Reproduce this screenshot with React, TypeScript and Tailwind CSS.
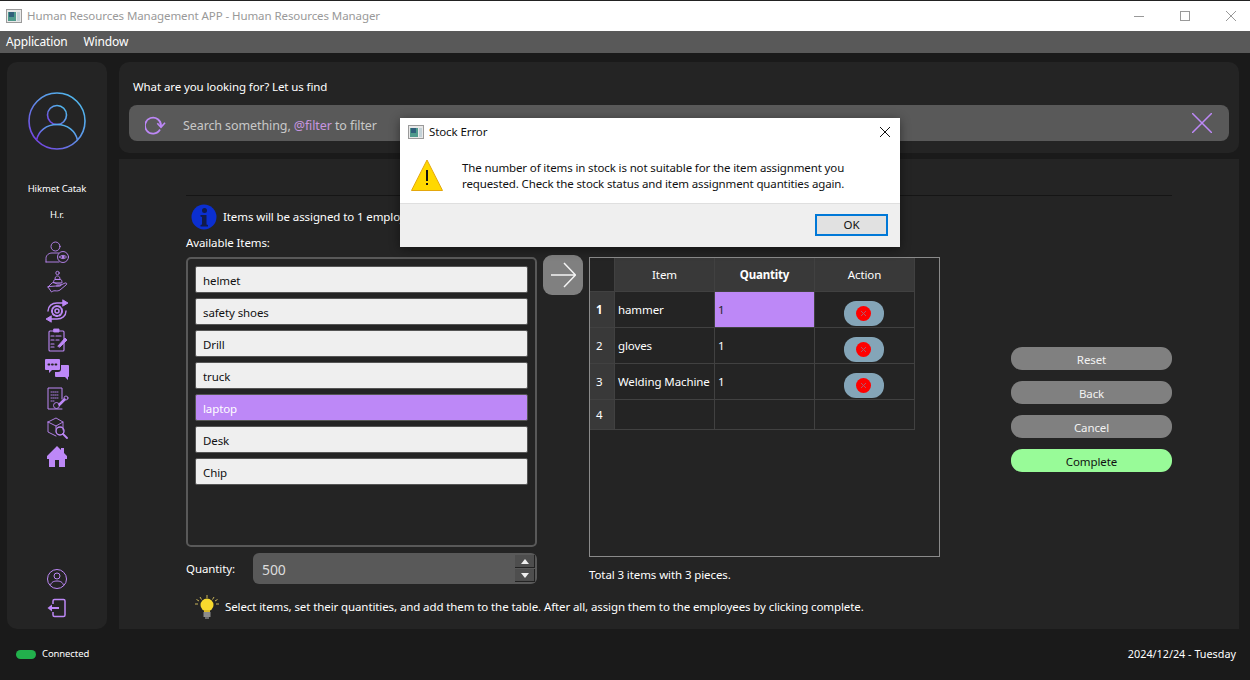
import { ReactNode } from 'react';

const items = ['helmet', 'safety shoes', 'Drill', 'truck', 'laptop', 'Desk', 'Chip'];

const rows = [
  { no: '1', item: 'hammer', qty: '1' },
  { no: '2', item: 'gloves', qty: '1' },
  { no: '3', item: 'Welding Machine', qty: '1' },
];

const Icon = ({ children, w = 24, h = 24 }: { children: ReactNode; w?: number; h?: number }) => (
  <svg width={w} height={h} viewBox="0 0 24 24" fill="none" stroke="#bd88f7" strokeWidth="0.9" strokeLinecap="round" strokeLinejoin="round">
    {children}
  </svg>
);

const AppIcon = () => (
  <svg width="16" height="14" viewBox="0 0 16 14">
    <rect x="0.5" y="0.5" width="15" height="13" fill="#e8e8e8" stroke="#9a9a9a" />
    <rect x="2" y="3" width="8" height="9" fill="#4f9a8c" />
    <rect x="3" y="3" width="5" height="5" fill="#2f5f7b" />
    <rect x="11" y="3" width="3" height="9" fill="#c4d2d8" />
  </svg>
);

const SideIcons = () => (
  <div className="flex flex-col items-center gap-[5px]">
    <Icon>
      <circle cx="10.5" cy="5.5" r="4.5" />
      <path d="M1 21v-3.5c0-3.5 3-5.5 6-5.5h6.5M1 21h13" />
      <circle cx="18" cy="16" r="5.5" />
      <path d="M14.5 16c2-2.2 5-2.2 7 0-2 2.2-5 2.2-7 0z" />
      <circle cx="18" cy="16" r="1" fill="#bd88f7" />
    </Icon>
    <Icon>
      <circle cx="12.5" cy="3" r="1.7" />
      <path d="M10 9c0-2 1-3 2.5-3s2.500 1 2.500 3zM8.500 12.500c0-2 1-3 1.500-3h5.500c1 0 1.500 1.500 1.500 3z" />
      <path d="M3 17l4-4c1-.8 2-.8 3 0l2 1h3c1.500 0 1.500 2-.5 2h-3M15 15.500l5-2.500c1.500-.5 2.500.8 1 2l-6 5c-1.500 1-3 1-5 .8-1.500-.2-2.500.5-3.500 1.200L3 17z" />
    </Icon>
    <Icon>
      <path d="M3 12c0-5 4-8 9-8h7" strokeWidth="1.400" />
      <path d="M18 1l5 3-5 3z" fill="#bd88f7" />
      <path d="M21 12c0 5-4 8-9 8H5" strokeWidth="1.400" />
      <path d="M6 17l-5 3 5 3z" fill="#bd88f7" />
      <circle cx="12" cy="12" r="2" strokeWidth="1.500" />
      <circle cx="12" cy="12" r="5" strokeWidth="2" strokeDasharray="2 1.500" />
    </Icon>
    <Icon>
      <rect x="4" y="3" width="15" height="20" rx="1" strokeWidth="1.100" />
      <rect x="9" y="1" width="5" height="3" fill="#bd88f7" />
      <path d="M6 8h3M6 12h3M6 16h3M6 19h3M11 8h5M11 12h3" strokeWidth="1.200" />
      <path d="M13 18l7-8 2 2-7 7z" fill="#bd88f7" />
    </Icon>
    <Icon>
      <path d="M1 2h13a1 1 0 0 1 1 1v9a1 1 0 0 1-1 1H7l-3 3v-3H1a1 1 0 0 1-1-1V3a1 1 0 0 1 1-1z" fill="#bd88f7" stroke="none" />
      <path d="M3.500 7.500h.8M7 7.500h.8M10.500 7.500h.8" stroke="#242424" strokeWidth="2" />
      <path d="M16 8h7a1 1 0 0 1 1 1v10a1 1 0 0 1-1 1v3l-3-3h-9a1 1 0 0 1-1-1v-4h3a3 3 0 0 0 3-3z" fill="#bd88f7" stroke="none" />
    </Icon>
    <Icon>
      <path d="M17 13V2H3v21h14" strokeWidth="1" />
      <path d="M6 6h8M6 9h8M6 12h8M6 15h4" strokeDasharray="1 1" />
      <circle cx="21" cy="12" r="2" />
      <path d="M19.500 13.500l-5 5" strokeWidth="2.500" />
      <ellipse cx="11.500" cy="19.500" rx="3" ry="3" />
    </Icon>
    <Icon>
      <path d="M3 7l8-4 7 4v8M3 7v10l8 4M3 7l8 4 7-4M11 11v3" />
      <circle cx="15" cy="16" r="4" strokeWidth="1.400" />
      <path d="M18 19l4 4" strokeWidth="1.800" />
    </Icon>
    <svg width="24" height="24" viewBox="0 0 24 24">
      <path d="M12 2L2 12v3h2v8h6v-7h4v7h6v-8h2v-3l-3-3V4h-3v2z" fill="#bd88f7" />
    </svg>
  </div>
);

const Avatar = () => (
  <svg width="60" height="60" viewBox="0 0 60 60" fill="none" stroke="url(#ring)" strokeWidth="1.600">
    <defs>
      <linearGradient id="ring" x1="1" y1="0" x2="0" y2="1">
        <stop offset="0" stopColor="#4cc4ef" />
        <stop offset="0.5" stopColor="#5f8fe8" />
        <stop offset="1" stopColor="#7a2fe0" />
      </linearGradient>
    </defs>
    <circle cx="30" cy="30" r="28" />
    <circle cx="30" cy="24" r="9.500" />
    <path d="M9.500 49c2-9 10-15.500 20.500-15.500S48.500 40 50.500 49" />
  </svg>
);

const InfoIcon = () => (
  <svg width="26" height="26" viewBox="0 0 26 26" className="shrink-0">
    <circle cx="13" cy="13" r="12.500" fill="#0b2fd0" />
    <circle cx="13.500" cy="6.500" r="2.500" fill="#111b4a" />
    <path d="M9.500 11h6v9.500l1.500.5v1.500H9.500V21l1.500-.5V13l-1.500-.5z" fill="#111b4a" />
  </svg>
);

const BulbIcon = () => (
  <svg width="26" height="26" viewBox="0 0 26 26" className="shrink-0">
    <path d="M13 1v3M6 3l1.500 2.500M20 3l-1.500 2.500M1 10h3M22 10h3M2.500 5.500l2.500 1.500M23.500 5.500L21 7" stroke="#c9b458" strokeWidth="1" />
    <circle cx="13" cy="11" r="6.500" fill="#f7d92e" />
    <path d="M10 16h6v2h-6z" fill="#d8b928" />
    <rect x="9.500" y="18" width="7" height="5" fill="#8c8c8c" />
    <rect x="11" y="23" width="4" height="2" fill="#6c6c6c" />
  </svg>
);

const WarningIcon = () => (
  <svg width="32" height="32" viewBox="0 0 32 32" className="shrink-0">
    <path d="M16 1L31.500 31.500H.5z" fill="#ffd800" stroke="#e4a70c" strokeWidth="1" strokeLinejoin="round" />
    <rect x="15" y="11" width="2" height="11" fill="#111" />
    <rect x="15" y="24" width="2" height="2" fill="#111" />
  </svg>
);

const RemoveButton = () => (
  <button className="w-10 h-[25px] rounded-xl bg-[#84a5b8] flex items-center justify-center">
    <span className="w-[15px] h-[15px] rounded-full bg-[#ff0000] flex items-center justify-center">
      <svg width="7" height="7" viewBox="0 0 7 7" stroke="#b05a6a" strokeWidth="1">
        <path d="M1 1l5 5M6 1l-5 5" />
      </svg>
    </span>
  </button>
);

const SpinButton = ({ up }: { up?: boolean }) => (
  <span className="w-5 h-[13px] bg-[#4e4e4e] border-b border-r border-[#222] flex items-center justify-center">
    <svg width="8" height="5" viewBox="0 0 8 5">
      <path d={up ? 'M0 5l4-5 4 5z' : 'M0 0l4 5 4-5z'} fill="#eee" />
    </svg>
  </span>
);

const headCell = 'bg-[#393939] border-r border-b border-[#414141] flex items-center justify-center';
const noCell = 'bg-[#393939] border-r border-b border-[#414141] flex items-center pl-[6px]';
const cell = 'border-r border-b border-[#414141] flex items-center pl-[3px]';

export default function App() {
  return (
    <div className="relative w-[1250px] h-[680px] overflow-hidden bg-[#1a1a1a] text-white font-['Noto_Sans','Open_Sans',sans-serif] text-[11.5px] tracking-[-0.1px] flex flex-col">
      {/* title bar */}
      <div className="h-[31px] shrink-0 bg-white border-t border-[#222] flex items-center pl-[6px] text-[#999]">
        <AppIcon />
        <span className="ml-[5px] tracking-[-0.08px]">Human Resources Management APP - Human Resources Manager</span>
        <div className="ml-auto flex items-center pr-[14px] gap-[35px]">
          <svg width="10" height="10" viewBox="0 0 10 10" stroke="#999" className="mr-[1px]"><path d="M0 5.500h10" /></svg>
          <svg width="10" height="10" viewBox="0 0 10 10" fill="none" stroke="#999"><rect x="0.5" y="0.5" width="9" height="9" /></svg>
          <svg width="10" height="10" viewBox="0 0 10 10" stroke="#999" className="ml-[1px]"><path d="M0 0l10 10M10 0L0 10" /></svg>
        </div>
      </div>

      {/* menu bar */}
      <div className="h-[22px] shrink-0 bg-[#595959] flex items-center pl-[6px] gap-4 text-[12px] tracking-[-0.15px]">
        <span>Application</span>
        <span>Window</span>
      </div>

      <div className="flex-1 min-h-0 flex pt-[9px] pl-[7px] pr-[11px] gap-3">
        {/* sidebar */}
        <aside className="w-[100px] h-[567px] shrink-0 rounded-[10px] bg-[#242424] flex flex-col items-center pt-[29px] pb-[10px]">
          <Avatar />
          <div className="mt-[31px] text-[9.500px] leading-[14px]">Hikmet Catak</div>
          <div className="mt-[12px] text-[9.500px] leading-[14px]">H.r.</div>
          <div className="mt-[19px]"><SideIcons /></div>
          <div className="mt-auto flex flex-col items-center gap-[7px]">
            <svg width="22" height="22" viewBox="0 0 22 22" fill="none" stroke="#bd88f7">
              <circle cx="11" cy="11" r="9.500" />
              <circle cx="11" cy="8" r="3" />
              <path d="M4.500 17.500C5 14 8 13 11 13s6 1 6.500 4.500" />
            </svg>
            <svg width="22" height="22" viewBox="0 0 22 22" fill="none" stroke="#bd88f7" strokeWidth="1.500">
              <path d="M7 7V4a1.500 1.500 0 0 1 1.500-1.500h9A1.500 1.500 0 0 1 19 4v14a1.500 1.500 0 0 1-1.500 1.500h-9A1.500 1.500 0 0 1 7 18v-3" />
              <path d="M13 11H3" strokeWidth="2" />
              <path d="M6 7.500L1.500 11 6 14.500z" fill="#bd88f7" stroke="none" />
            </svg>
          </div>
        </aside>

        <div className="flex-1 min-w-0 flex flex-col gap-[6px]">
          {/* search panel */}
          <div className="h-[91px] shrink-0 rounded-[10px] bg-[#242424] px-[10px] pt-[17px]">
            <div className="pl-[4px] leading-[16px]">What are you looking for? Let us find</div>
            <div className="mt-[10px] h-9 rounded-lg bg-[#595959] flex items-center pl-[16px] pr-[17px]">
              <svg width="22" height="22" viewBox="0 0 22 22" fill="none" stroke="#bd88f7" strokeWidth="1.800" className="mt-[6px] shrink-0">
                <path d="M15 14.500A8 8 0 1 1 16 11" />
                <path d="M12.300 8.300L16 12.300L20 7.700" strokeWidth="1.600" />
              </svg>
              <span className="ml-[16px] pt-[6px] text-[12.500px] text-[#c8c8c8]">
                Search something, <span className="text-[#c795e0]">@filter</span> to filter
              </span>
              <svg width="20" height="20" viewBox="0 0 20 20" stroke="#bd88f7" strokeWidth="1.500" className="ml-auto">
                <path d="M0 0l20 20M20 0L0 20" />
              </svg>
            </div>
          </div>

          {/* main panel */}
          <main className="h-[470px] shrink-0 bg-[#242424] pl-[67px] pt-[36px]">
            <div className="w-[986px] h-px bg-[#151515]" />
            <div className="mt-[8px] ml-[5px] h-[26px] flex items-center gap-[6px]">
              <InfoIcon />
              <span>Items will be assigned to 1 employee.</span>
            </div>

            <div className="mt-[4px] flex">
              <div className="w-[351px] shrink-0">
                <div className="h-5 leading-[18px]">Available Items:</div>
                <div className="mt-[3px] h-[290px] rounded-[5px] border-2 border-[#595959] pt-[7px] pl-[7px] pr-[7px] flex flex-col gap-[5px]">
                  {items.map((name) => (
                    <div
                      key={name}
                      className={
                        name === 'laptop'
                          ? 'h-[27px] shrink-0 rounded-[2px] border border-[#555] bg-[#bd88f7] text-white flex items-center pl-[7px] pt-[3px]'
                          : 'h-[27px] shrink-0 rounded-[2px] border border-[#555] bg-[#efefef] text-[#111] flex items-center pl-[7px] pt-[3px]'
                      }
                    >
                      {name}
                    </div>
                  ))}
                </div>
                <div className="mt-[6px] flex items-center">
                  <span className="w-[67px]">Quantity:</span>
                  <div className="flex-1 h-[31px] rounded-md bg-[#595959] flex items-center pl-[9px] pr-[2px]">
                    <span className="text-[14px] pt-[2px] text-[#dcdcdc]">500</span>
                    <div className="ml-auto flex flex-col gap-px">
                      <SpinButton up />
                      <SpinButton />
                    </div>
                  </div>
                </div>
              </div>

              <div className="w-[52px] shrink-0 pl-[6px] pt-[21px]">
                <button className="w-10 h-10 rounded-[9px] bg-[#808080] flex items-center justify-center">
                  <svg width="26" height="26" viewBox="0 0 26 26" fill="none" stroke="#f4f4f4" strokeWidth="1.500">
                    <path d="M1 13h24M14 1l11.500 12L14 25" />
                  </svg>
                </button>
              </div>

              <div className="w-[351px] shrink-0">
                <div className="h-5 leading-[18px] text-[#bbb]">Selected Items:</div>
                <div className="mt-[3px] h-[300px] border border-[#8a8a8a]">
                  <div className="w-[325px] grid grid-cols-[25px_100px_100px_100px] grid-rows-[34px_36px_36px_36px_30px]">
                    <div className="border-r border-b border-[#414141]" />
                    <div className={headCell}>Item</div>
                    <div className={`${headCell} font-bold tracking-[-0.2px]`}>Quantity</div>
                    <div className={headCell}>Action</div>
                    {rows.map((row, i) => (
                      <div key={row.no} className="contents">
                        <div className={i === 0 ? `${noCell} font-bold` : noCell}>{row.no}</div>
                        <div className={`${cell} whitespace-nowrap`}>{row.item}</div>
                        <div className={i === 0 ? `${cell} bg-[#bd88f7] text-[#222]` : cell}>{row.qty}</div>
                        <div className="border-r border-b border-[#414141] flex items-center justify-center pt-[7px] pr-[2px]">
                          <RemoveButton />
                        </div>
                      </div>
                    ))}
                    <div className={noCell}>4</div>
                    <div className={cell} />
                    <div className={cell} />
                    <div className={cell} />
                  </div>
                </div>
                <div className="mt-[10px] leading-4">Total 3 items with 3 pieces.</div>
              </div>

              <div className="ml-[71px] w-[161px] shrink-0 pt-[113px] flex flex-col gap-[11px]">
                {['Reset', 'Back', 'Cancel'].map((label) => (
                  <button key={label} className="h-[23px] pt-[2px] rounded-[11px] bg-[#808080] text-[#f2f2f2]">
                    {label}
                  </button>
                ))}
                <button className="h-[23px] pt-[2px] rounded-[11px] bg-[#98fb98] text-[#111]">Complete</button>
              </div>
            </div>

            <div className="mt-[10px] ml-[8px] flex items-center gap-[5px]">
              <BulbIcon />
              <span>Select items, set their quantities, and add them to the table. After all, assign them to the employees by clicking complete.</span>
            </div>
          </main>
        </div>
      </div>

      {/* status bar */}
      <div className="absolute left-0 right-0 bottom-0 h-[51px] flex items-center pl-4 pr-[14px] pb-[1px]">
        <span className="w-5 h-[9px] rounded-full bg-[#22b14c]" />
        <span className="ml-[6px] text-[9.500px]">Connected</span>
        <span className="ml-auto text-[10.800px] tracking-normal">2024/12/24 - Tuesday</span>
      </div>

      {/* message box */}
      <div className="absolute left-[400px] top-[118px] w-[500px] h-[129px] bg-white text-[#111] shadow-[0_2px_10px_rgba(0,0,0,0.45)] flex flex-col">
        <div className="h-[28px] shrink-0 flex items-center pl-2 pr-[10px]">
          <AppIcon />
          <span className="ml-[5px]">Stock Error</span>
          <svg width="10" height="10" viewBox="0 0 10 10" stroke="#111" className="ml-auto"><path d="M0 0l10 10M10 0L0 10" /></svg>
        </div>
        <div className="flex-1 flex pl-[11px] pt-[13px]">
          <WarningIcon />
          <p className="ml-[19px] pt-[1px] leading-4 tracking-[-0.13px]">
            The number of items in stock is not suitable for the item assignment you
            <br />
            requested. Check the stock status and item assignment quantities again.
          </p>
        </div>
        <div className="h-[44px] shrink-0 bg-[#efefef] border-t border-[#dfdfdf] flex items-center justify-end pr-3 pb-[2px]">
          <button className="w-[73px] h-[22px] bg-[#e1e1e1] border-2 border-[#0078d7]">OK</button>
        </div>
      </div>
    </div>
  );
}
